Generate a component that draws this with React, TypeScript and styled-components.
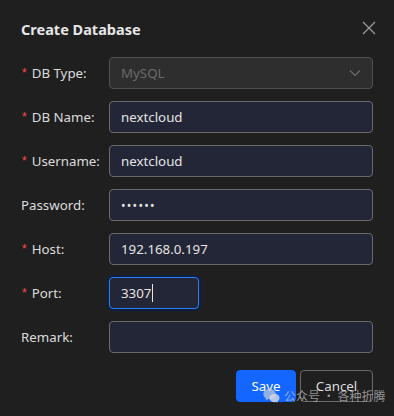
import styled, { createGlobalStyle } from "styled-components";

const GlobalStyle = createGlobalStyle`
  html, body {
    margin: 0;
    padding: 0;
    background: #1f1f1f;
  }
  * { box-sizing: border-box; }
`;

const StyledDialog = styled.div`
  position: relative;
  width: 394px;
  height: 416px;
  background-color: #1f1f1f;
  padding: 19px 21px 0 21px;
  font-family: "Noto Sans", "Noto Sans CJK SC", sans-serif;
  color: #e2e2e2;
  overflow: hidden;
`;
const StyledHeader = styled.div`
  display: flex;
  align-items: center;
  justify-content: space-between;
  height: 20px;
`;
const StyledTitle = styled.div`
  font-size: 14.5px;
  font-weight: bold;
  color: #e6e6e6;
`;
const StyledClose = styled.div`
  display: flex;
  margin-right: -3px;
  margin-top: -2px;
  cursor: pointer;
`;
const StyledForm = styled.div`
  display: flex;
  flex-direction: column;
  gap: 12px;
  margin-top: 18px;
`;
const StyledRow = styled.div`
  display: flex;
  align-items: center;
  height: 32px;
`;
const StyledLabel = styled.div`
  display: flex;
  align-items: center;
  width: 88px;
  font-size: 13.3px;
  color: #dcdcdc;
  white-space: nowrap;
`;
const StyledStar = styled.span`
  color: #ff4d4f;
  font-size: 12px;
  margin: 0 5px 0 1px;
  font-family: "Liberation Sans", sans-serif;
`;
const StyledInput = styled.div<{ $width?: number; $focus?: boolean }>`
  display: flex;
  align-items: center;
  height: 32px;
  width: ${(p) => (p.$width ? `${p.$width}px` : "264px")};
  padding: 0 11px;
  background-color: #232636;
  border: 1px solid ${(p) => (p.$focus ? "#2a7ff0" : "#6a6a6a")};
  border-radius: 4px;
  font-size: 13.3px;
  color: #e4e4e4;
  ${(p) => p.$focus && "box-shadow: 0 0 0 2px rgba(10, 30, 70, 0.9);"}
`;
const StyledSelect = styled(StyledInput)`
  justify-content: space-between;
  background-color: #2e2e2e;
  border-color: #4f4f4f;
  color: #6b6b6b;
`;
const StyledCaret = styled.span`
  width: 1px;
  height: 18px;
  background: #e4e4e4;
  margin-left: 1px;
`;
const StyledDots = styled.span`
  letter-spacing: 1.3px;
  font-size: 12px;
`;
const StyledFooter = styled.div`
  display: flex;
  justify-content: flex-end;
  gap: 4px;
  margin-top: 17px;
`;
const StyledButton = styled.div<{ $primary?: boolean }>`
  display: flex;
  align-items: center;
  justify-content: center;
  height: 32px;
  width: ${(p) => (p.$primary ? "60px" : "73px")};
  border-radius: 4px;
  font-size: 13.3px;
  background-color: ${(p) => (p.$primary ? "#1366ff" : "transparent")};
  color: ${(p) => (p.$primary ? "#ffffff" : "#dcdcdc")};
  border: 1px solid ${(p) => (p.$primary ? "#1366ff" : "#6a6a6a")};
  cursor: pointer;
`;
const StyledWatermark = styled.div`
  position: absolute;
  left: 263px;
  top: 387px;
  display: flex;
  align-items: center;
  gap: 4px;
  font-size: 12px;
  white-space: nowrap;
  color: rgba(200, 200, 200, 0.7);
  font-family: "Noto Sans CJK SC", sans-serif;
  pointer-events: none;
`;

const WeChatIcon = () => (
  <svg width="17" height="15" viewBox="0 0 17 15">
    <ellipse cx="6.5" cy="6" rx="6.2" ry="5.2" fill="rgba(190,200,220,0.75)" />
    <path d="M3 10 L2.5 12.5 L5.5 10.8 Z" fill="rgba(190,200,220,0.75)" />
    <ellipse cx="11.5" cy="10" rx="5" ry="4.2" fill="rgba(210,215,225,0.85)" />
    <path d="M14 13 L15 14.8 L12.5 13.6 Z" fill="rgba(210,215,225,0.85)" />
  </svg>
);

const App = (): JSX.Element => {
  return (
    <StyledDialog>
      <GlobalStyle />
      <StyledHeader>
        <StyledTitle>Create Database</StyledTitle>
        <StyledClose>
          <svg width="14" height="14" viewBox="0 0 14 14">
            <path d="M1 1 L13 13 M13 1 L1 13" stroke="#9a9a9a" strokeWidth="1.3" />
          </svg>
        </StyledClose>
      </StyledHeader>

      <StyledForm>
        <StyledRow>
          <StyledLabel><StyledStar>*</StyledStar>DB Type:</StyledLabel>
          <StyledSelect>
            MySQL
            <svg width="12" height="8" viewBox="0 0 12 8">
              <path d="M1 1.5 L6 6.5 L11 1.5" stroke="#6b6b6b" strokeWidth="1.2" fill="none" />
            </svg>
          </StyledSelect>
        </StyledRow>
        <StyledRow>
          <StyledLabel><StyledStar>*</StyledStar>DB Name:</StyledLabel>
          <StyledInput>nextcloud</StyledInput>
        </StyledRow>
        <StyledRow>
          <StyledLabel><StyledStar>*</StyledStar>Username:</StyledLabel>
          <StyledInput>nextcloud</StyledInput>
        </StyledRow>
        <StyledRow>
          <StyledLabel>Password:</StyledLabel>
          <StyledInput><StyledDots>••••••</StyledDots></StyledInput>
        </StyledRow>
        <StyledRow>
          <StyledLabel><StyledStar>*</StyledStar>Host:</StyledLabel>
          <StyledInput>192.168.0.197</StyledInput>
        </StyledRow>
        <StyledRow>
          <StyledLabel><StyledStar>*</StyledStar>Port:</StyledLabel>
          <StyledInput $width={90} $focus>3307<StyledCaret /></StyledInput>
        </StyledRow>
        <StyledRow>
          <StyledLabel>Remark:</StyledLabel>
          <StyledInput />
        </StyledRow>
      </StyledForm>

      <StyledFooter>
        <StyledButton $primary>Save</StyledButton>
        <StyledButton>Cancel</StyledButton>
      </StyledFooter>

      <StyledWatermark>
        <WeChatIcon />
        <span>公众号 · 各种折腾</span>
      </StyledWatermark>
    </StyledDialog>
  );
};

export default App;
